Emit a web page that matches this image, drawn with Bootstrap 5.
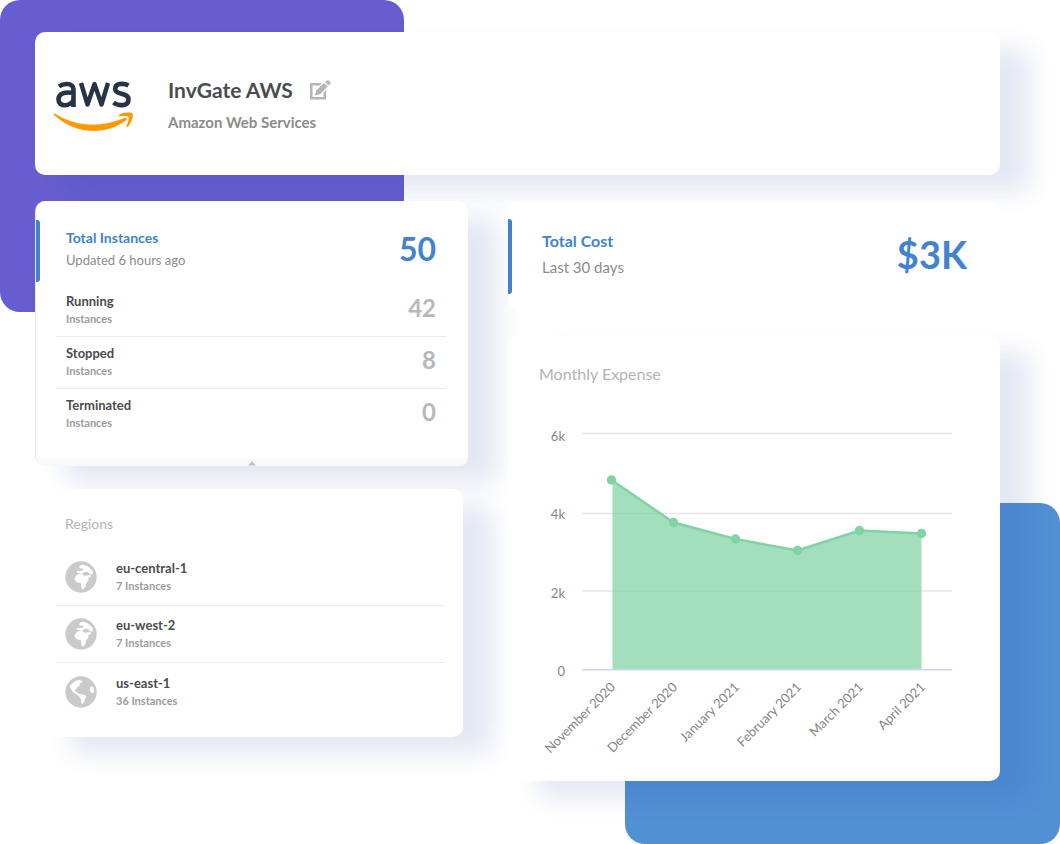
<!DOCTYPE html>
<html lang="en">
<head>
<meta charset="utf-8">
<meta name="viewport" content="width=device-width, initial-scale=1">
<title>InvGate AWS</title>
<link href="https://cdn.jsdelivr.net/npm/bootstrap@5.3.0/dist/css/bootstrap.min.css" rel="stylesheet">
<style>
  body { font-family: Lato, "Liberation Sans", sans-serif; background: #fff; color: #4a4c50; }
  .scene { position: relative; isolation: isolate; min-height: 100vh; padding: 32px 60px 63px 35px; }
  .backdrop { position: absolute; z-index: -1; border-radius: 20px; }
  .backdrop-violet { left: 0; top: 0; width: 38.1%; height: 312px; background: #665dd1; border-bottom-right-radius: 0; }
  .backdrop-blue { right: 0; bottom: 0; width: 41%; height: 341px; background: #5290d4; }
  .panel { background: #fff; border-radius: 10px; }
  .lifted { box-shadow: 30px 17px 24px rgba(30, 63, 163, .12); }
  .account { min-height: 143px; padding: 0 18px; gap: 34px; }
  .account-name { font-size: 21px; line-height: 28px; font-weight: 700; }
  .account-kind { font-size: 15px; line-height: 20px; font-weight: 700; color: #8c8c8c; }
  .board { display: grid; grid-template-columns: 433fr 492fr; column-gap: 40px; margin-top: 26px; }
  .accent::before { content: ""; width: 4px; align-self: stretch; background: #4183d0; border-radius: 0 3px 3px 0; }
  .accent > div { padding-bottom: 4px; }
  .accent-title { font-weight: 700; color: #4183d0; }
  .muted { color: #8c8c8c; }
  .fs-14 { font-size: 14px; line-height: 22px; }
  .fs-16 { font-size: 16px; line-height: 27px; }
  .fs-14 .muted { font-size: 13px; }
  .fs-16 .muted { font-size: 15px; }
  .total { font-size: 32px; line-height: 40px; font-weight: 700; color: #4183d0; }
  .total-cost { font-size: 38px; line-height: 48px; }
  .instances { border-left: 1px solid #e6e6e6; padding-top: 19px; }
  .instances .accent { min-height: 62px; padding-right: 32px; gap: 26px; }
  .item-list { margin: 3px 22px 0 20px; }
  .item { min-height: 52px; padding: 0 10px 2px; border-bottom: 1px solid #ebebeb; }
  .item:last-child { border-bottom: 0; }
  .item-name { font-size: 13px; line-height: 18px; font-weight: 700; }
  .item-note { font-size: 11px; line-height: 18px; font-weight: 700; color: #9c9c9c; }
  .item-count { font-size: 24px; line-height: 30px; font-weight: 700; color: #b8b8b8; padding-bottom: 4px; }
  .fold { height: 8px; background: #f9f9f9; border-radius: 0 0 10px 10px; margin-top: 17px; }
  .regions { margin: 23px 5px 0; padding: 24px 18px 17px 16px; }
  .regions .item { min-height: 57px; gap: 19px; padding: 0 9px; }
  .regions .item-list { margin: 14px 0 0; }
  .panel-title { font-weight: 400; color: #b4b4b4; margin: 0; }
  .regions .panel-title { padding-left: 9px; }
  .cost { padding: 18px 0 16px; }
  .cost .accent { min-height: 75px; padding-right: 33px; gap: 30px; }
  .cost .accent > div { padding-bottom: 6px; }
  .expense { margin-top: 25px; padding-top: 25px; min-height: 446px; }
  .expense .panel-title { padding-left: 31px; }
  .chart text { font-size: 13px; fill: #858585; }
</style>
</head>
<body>
<main class="scene">
  <div class="backdrop backdrop-violet"></div>
  <div class="backdrop backdrop-blue"></div>

  <header class="panel lifted account d-flex align-items-center">
    <svg width="81" height="54" viewBox="0 0 81 54" fill="none" role="img" aria-label="aws" class="flex-shrink-0 mt-1">
      <g stroke="#273445" stroke-width="4.6" stroke-linejoin="round">
        <path d="M6 7.5C10 4.5 20 3 20.5 10.500V28M20.500 14C12 12.500 5.500 14.500 5.500 20.500C5.500 28.500 17 27.500 20.500 21"/>
        <path d="M28 4L34.500 25.500L41.500 5L48.500 25.500L55 4" stroke-width="4.400"/>
        <path d="M75.500 6.500C71 4 62 4 62.200 10C62.500 16.500 75.500 13 75.500 20.500C75.500 28 65 27 60.500 23.500"/>
      </g>
      <path d="M1 36C0 35 1 34 2.500 35C24 48.500 49 48.500 71.500 39C73.500 38.500 74.500 40 73 41.500C52 57 22 55.500 1 36Z" fill="#ff9900"/>
      <path d="M66 36C70 33 78 33 79.500 34.500C81 37 78 45 74.500 48C73.500 48.500 73 48 73.500 47C75 43.500 76.500 39.500 75.500 38C74 36.500 70 37 67 37.300C65.500 37.500 65.300 36.700 66 36Z" fill="#ff9900"/>
    </svg>
    <div>
      <div class="d-flex align-items-center gap-3">
        <h1 class="account-name m-0">InvGate AWS</h1>
        <button type="button" class="btn p-0 border-0 d-flex" aria-label="Edit name">
          <svg width="22" height="20" viewBox="0 0 22 20" fill="#b5b5b5">
            <path d="M1 3H13L10.500 5.500H3.500V17H14.500V12.500L17 10V19.500H1Z"/>
            <path d="M6 15.500L7.200 10.500L15 3L18.700 6.500L11 14.200ZM16 2L18 .4Q19 0 19.600 .5L21.500 2.400Q22 3 21.500 3.700L19.600 5.500Z"/>
          </svg>
        </button>
      </div>
      <div class="account-kind mt-2">Amazon Web Services</div>
    </div>
  </header>

  <div class="board">
    <div>
      <section class="panel lifted instances">
        <div class="accent d-flex align-items-center">
          <div class="fs-14 flex-grow-1">
            <div class="accent-title">Total Instances</div>
            <div class="muted">Updated 6 hours ago</div>
          </div>
          <div class="total">50</div>
        </div>
        <ul class="item-list list-unstyled">
          <li class="item d-flex justify-content-between align-items-center"><div><div class="item-name">Running</div><div class="item-note">Instances</div></div><div class="item-count">42</div></li>
          <li class="item d-flex justify-content-between align-items-center"><div><div class="item-name">Stopped</div><div class="item-note">Instances</div></div><div class="item-count">8</div></li>
          <li class="item d-flex justify-content-between align-items-center"><div><div class="item-name">Terminated</div><div class="item-note">Instances</div></div><div class="item-count">0</div></li>
        </ul>
        <button type="button" class="fold btn border-0 p-0 w-100 d-flex justify-content-center align-items-end" aria-label="Collapse">
          <svg width="8" height="5" viewBox="0 0 8 5"><path d="M0 4.500L4 0L8 4.500Z" fill="#c4c4c4"/></svg>
        </button>
      </section>

      <section class="panel lifted regions">
        <h2 class="panel-title fs-14">Regions</h2>
        <ul class="item-list list-unstyled">
          <li class="item d-flex align-items-center"><svg width="32" height="32" viewBox="0 0 96 96"><use href="#globe-africa"/></svg><div><div class="item-name">eu-central-1</div><div class="item-note">7 Instances</div></div></li>
          <li class="item d-flex align-items-center"><svg width="32" height="32" viewBox="0 0 96 96"><use href="#globe-africa"/></svg><div><div class="item-name">eu-west-2</div><div class="item-note">7 Instances</div></div></li>
          <li class="item d-flex align-items-center"><svg width="32" height="32" viewBox="0 0 96 96"><use href="#globe-americas"/></svg><div><div class="item-name">us-east-1</div><div class="item-note">36 Instances</div></div></li>
        </ul>
      </section>
    </div>

    <div>
      <section class="panel cost">
        <div class="accent d-flex align-items-center">
          <div class="fs-16 flex-grow-1">
            <div class="accent-title">Total Cost</div>
            <div class="muted">Last 30 days</div>
          </div>
          <div class="total total-cost">$3K</div>
        </div>
      </section>

      <section class="panel lifted expense">
        <h2 class="panel-title fs-16">Monthly Expense</h2>
        <svg class="chart d-block w-100" viewBox="508 387 492 381" role="img" aria-label="Monthly expense from November 2020 to April 2021">
          <g stroke="#e6e6e6" stroke-width="1.500"><path d="M582 433.500H952M582 513.500H952M582 591H952"/></g>
          <path d="M612.500 480L673.500 522.500L735.500 539L797.500 550.500L859.500 530.500L921.500 533.500V670H612.500Z" fill="#7fd3a4" fill-opacity=".72"/>
          <path d="M582 669.800H952" stroke="#ccd6eb" stroke-width="1.500"/>
          <path d="M611.500 480L673.500 522.500L735.500 539L797.500 550.500L859.500 530.500L921.500 533.500" fill="none" stroke="#80d3a5" stroke-width="2.500"/>
          <g fill="#80d3a5"><circle cx="611.500" cy="480" r="4.700"/><circle cx="673.500" cy="522.500" r="4.700"/><circle cx="735.500" cy="539" r="4.700"/><circle cx="797.500" cy="550.500" r="4.700"/><circle cx="859.500" cy="530.500" r="4.700"/><circle cx="921.500" cy="533.500" r="4.700"/></g>
          <g text-anchor="end"><text x="565" y="441">6k</text><text x="565" y="519">4k</text><text x="565" y="598">2k</text><text x="565" y="676">0</text></g>
          <g text-anchor="end">
            <text transform="translate(616 688) rotate(-45)">November 2020</text>
            <text transform="translate(678 688) rotate(-45)">December 2020</text>
            <text transform="translate(740 688) rotate(-45)">January 2021</text>
            <text transform="translate(802 688) rotate(-45)">February 2021</text>
            <text transform="translate(864 688) rotate(-45)">March 2021</text>
            <text transform="translate(926 688) rotate(-45)">April 2021</text>
          </g>
        </svg>
      </section>
    </div>
  </div>

  <svg width="0" height="0" class="d-none">
    <symbol id="globe-africa" viewBox="0 0 96 96">
      <circle cx="48" cy="48" r="47" fill="#cacaca"/>
      <path fill="#fff" d="M43 17Q47 10 57 12Q75 17 84 33L82 41L73 39L70 32L58 34L51 38L37 36L35 30L52 29L56 23L43 22ZM32 46Q36 39 48 38L60 44L77 42L78 48L69 52L71 58L64 66L61 78L54 86L49 80L48 67L35 64L28 55Z"/>
    </symbol>
    <symbol id="globe-americas" viewBox="0 0 96 96">
      <circle cx="48" cy="48" r="47" fill="#cacaca"/>
      <path fill="#fff" d="M14 31Q25 14 43 11L52 16L49 22L43 21L45 28L38 33L33 40L28 43L35 49L44 54L57 56L65 61L61 69L55 82L50 85L48 70L42 60L31 53L21 45ZM76 33L84 31Q88 42 86 52L79 51L74 43Z"/>
    </symbol>
  </svg>
</main>
<script src="https://cdn.jsdelivr.net/npm/bootstrap@5.3.0/dist/js/bootstrap.bundle.min.js"></script>
</body>
</html>
